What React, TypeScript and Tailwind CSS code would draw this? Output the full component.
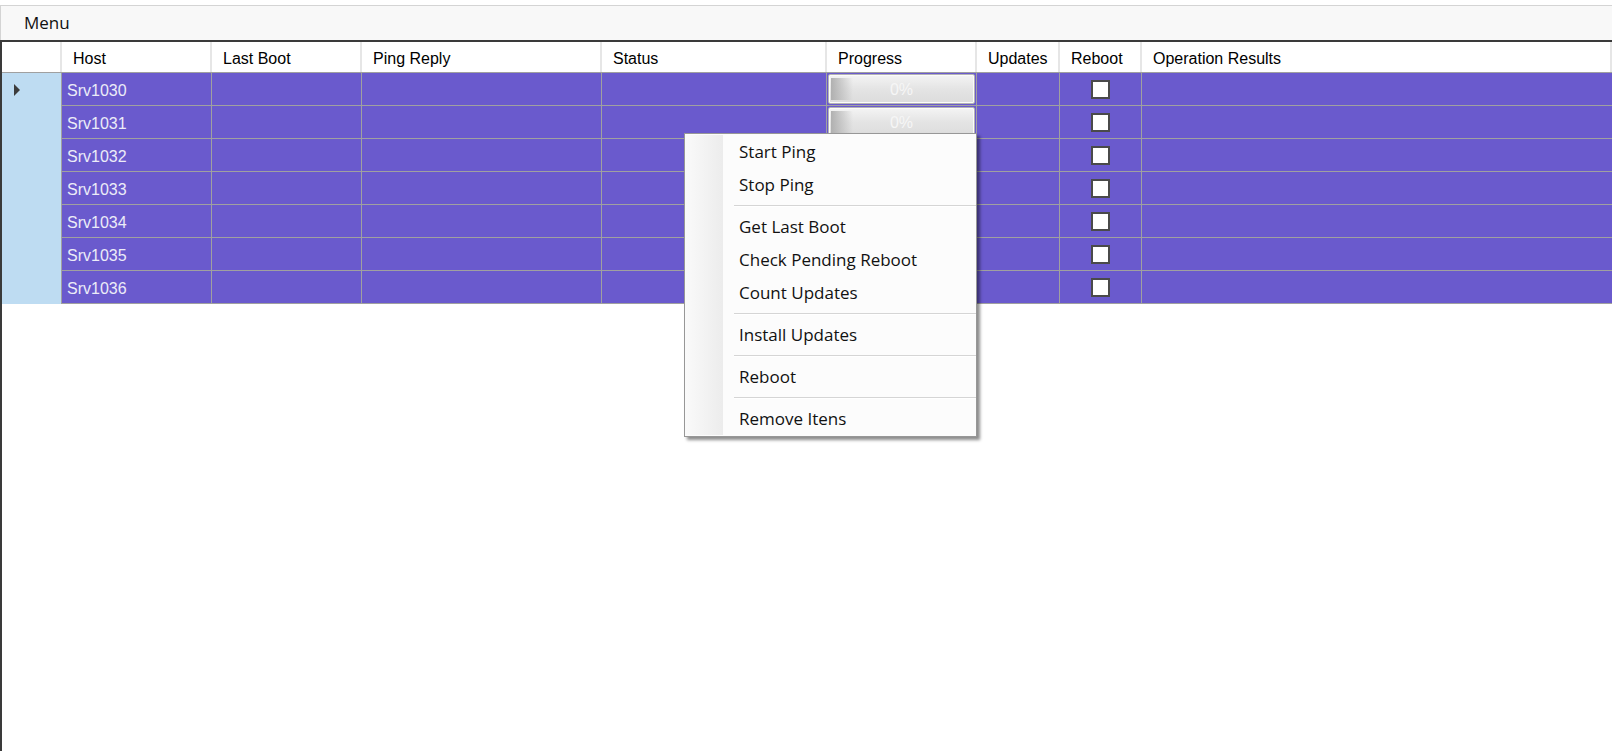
import React from "react";

const hosts = ["Srv1030", "Srv1031", "Srv1032", "Srv1033", "Srv1034", "Srv1035", "Srv1036"];

const cols = "grid grid-cols-[60px_150px_150px_240px_225px_150px_83px_82px_1fr]";

const headers = ["Host", "Last Boot", "Ping Reply", "Status", "Progress", "Updates", "Reboot", "Operation Results"];

type MenuEntry = string | null;

const menuItems: MenuEntry[] = [
  "Start Ping",
  "Stop Ping",
  null,
  "Get Last Boot",
  "Check Pending Reboot",
  "Count Updates",
  null,
  "Install Updates",
  null,
  "Reboot",
  null,
  "Remove Itens",
];

const ProgressBar = () => (
  <div className="relative h-[30px] w-full rounded-[2px] border border-[#b4b4b4] bg-gradient-to-b from-[#f4f4f4] via-[#e4e4e4] to-[#dcdcdc] shadow-[inset_0_0_0_1px_#fbfbfb] overflow-hidden">
    <div className="absolute left-[2px] top-[3px] bottom-[3px] w-[22px] bg-gradient-to-r from-[#b0b0b0] to-transparent" />
    <div className="absolute inset-0 flex items-center justify-center pt-[2px] text-[#f6f6f6] text-[16px]">0%</div>
  </div>
);

const ContextMenu = () => (
  <div className="absolute left-[684px] top-[133px] w-[293px] border border-[#979797] bg-[#fcfcfc] shadow-[3px_3px_3px_rgba(0,0,0,0.45)] font-['Open_Sans',sans-serif] text-[17px] text-[#111]">
    <div className="flex py-[1px]">
      <div className="w-[38px] shrink-0 bg-gradient-to-r from-[#fafafa] to-[#ececec]" />
      <div className="flex-1 flex flex-col">
        {menuItems.map((item, i) =>
          item === null ? (
            <div key={i} className="h-[9px] flex items-center pl-[11px]">
              <div className="w-full border-t border-[#d5d5d5] border-b border-b-white" />
            </div>
          ) : (
            <div key={i} className="h-[33px] flex items-center pl-[16px]">
              {item}
            </div>
          )
        )}
      </div>
    </div>
  </div>
);

export default function App() {
  return (
    <div className="relative w-full h-[751px] bg-white overflow-hidden font-['Liberation_Sans',Arial,sans-serif]">
      <div className="h-[5px] bg-white" />
      <div className="h-[35px] border-t border-l border-[#d4d4d4] bg-[#f8f8f8] flex items-center pl-[23px] font-['Open_Sans',sans-serif] text-[17px] text-[#111]">
        Menu
      </div>
      <div className="h-[711px] border-l-2 border-t-2 border-[#3a3a3a] bg-white">
        {/* header row */}
        <div className={`${cols} h-[31px] border-b border-[#a0a0a0] bg-white text-[16px] text-black`}>
          <div className="border-r-2 border-[#e6e6e6]" />
          {headers.map((h) => (
            <div key={h} className="border-r-2 border-[#e6e6e6] flex items-center pl-[11px] pt-[4px]">
              {h}
            </div>
          ))}
        </div>
        {/* data rows */}
        {hosts.map((host, i) => (
          <div key={host} className={`${cols} h-[33px] text-[16px] text-[#ececf8]`}>
            <div className="bg-[#bedcf2] border-r border-[#a0a0a0] flex items-center pl-[12px]">
              {i === 0 && (
                <div className="w-0 h-0 border-y-[6px] border-y-transparent border-l-[6px] border-l-[#3c3c3c]" />
              )}
            </div>
            <div className="bg-[#6a5acd] border-r border-b border-[#a0a0a0] flex items-center pl-[5px] pt-[3px]">{host}</div>
            <div className="bg-[#6a5acd] border-r border-b border-[#a0a0a0]" />
            <div className="bg-[#6a5acd] border-r border-b border-[#a0a0a0]" />
            <div className="bg-[#6a5acd] border-r border-b border-[#a0a0a0]" />
            <div className="bg-[#6a5acd] border-r border-b border-[#a0a0a0] flex items-center px-[1px]">
              {i < 2 && <ProgressBar />}
            </div>
            <div className="bg-[#6a5acd] border-r border-b border-[#a0a0a0]" />
            <div className="bg-[#6a5acd] border-r border-b border-[#a0a0a0] flex items-center justify-center">
              <div className="w-[19px] h-[19px] border-2 border-[#4a4a4a] bg-white" />
            </div>
            <div className="bg-[#6a5acd] border-b border-[#a0a0a0]" />
          </div>
        ))}
      </div>
      <ContextMenu />
    </div>
  );
}
